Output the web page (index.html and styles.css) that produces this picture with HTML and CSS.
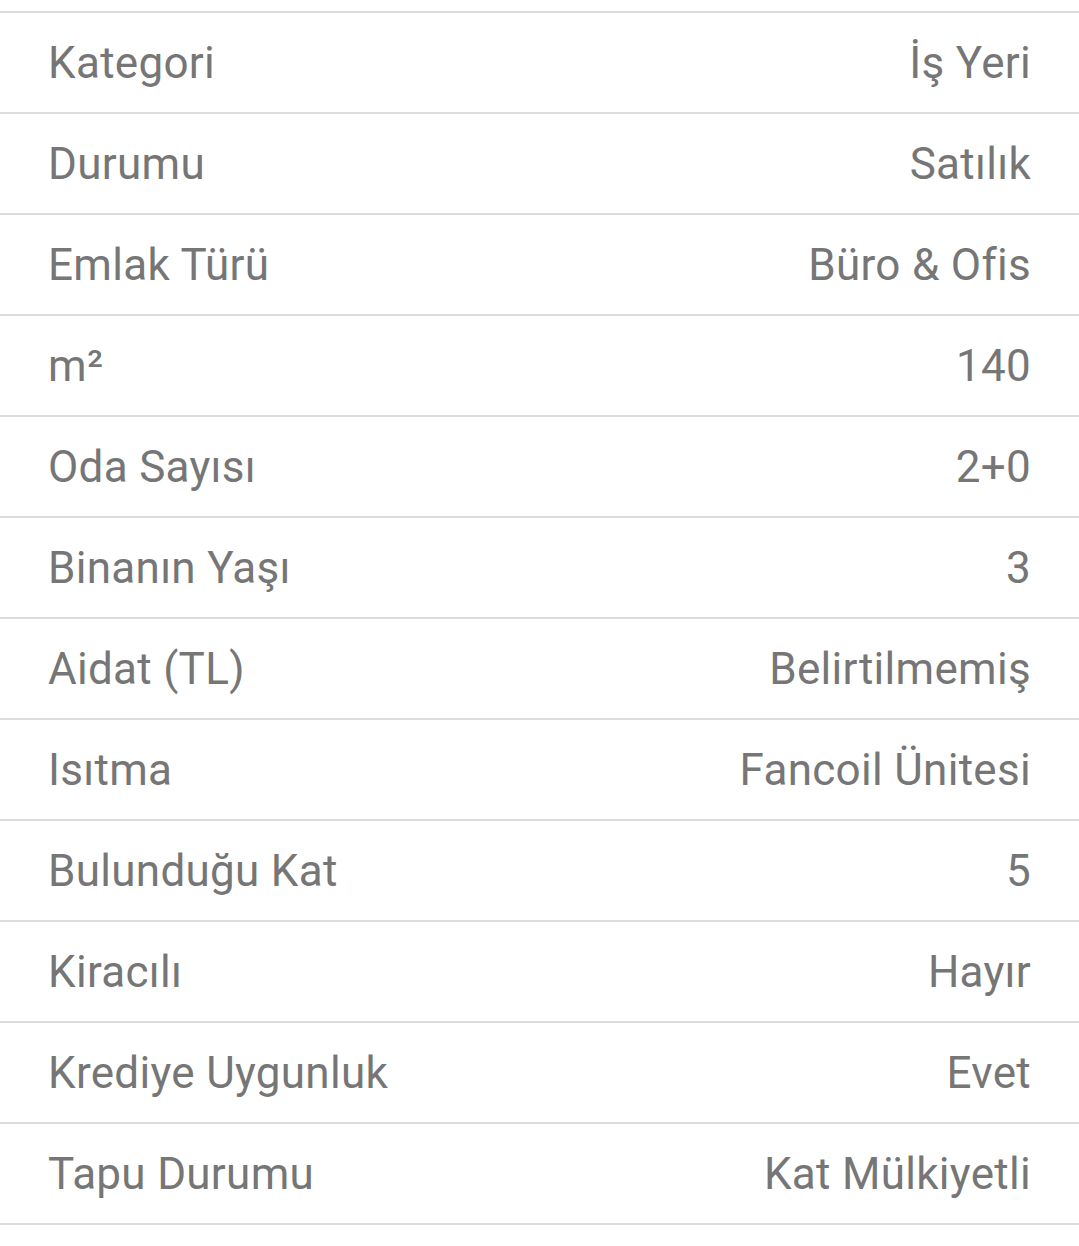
FILE: index.html
```html
<!DOCTYPE html>
<html lang="tr">
<head>
<meta charset="utf-8">
<link rel="stylesheet" href="styles.css">
</head>
<body>
<div class="list">
  <div class="row"><span class="label">Kategori</span><span class="value">İş Yeri</span></div>
  <div class="row"><span class="label">Durumu</span><span class="value">Satılık</span></div>
  <div class="row"><span class="label">Emlak Türü</span><span class="value">Büro &amp; Ofis</span></div>
  <div class="row"><span class="label">m²</span><span class="value">140</span></div>
  <div class="row"><span class="label">Oda Sayısı</span><span class="value">2+0</span></div>
  <div class="row"><span class="label">Binanın Yaşı</span><span class="value">3</span></div>
  <div class="row"><span class="label">Aidat (TL)</span><span class="value">Belirtilmemiş</span></div>
  <div class="row"><span class="label">Isıtma</span><span class="value">Fancoil Ünitesi</span></div>
  <div class="row"><span class="label">Bulunduğu Kat</span><span class="value">5</span></div>
  <div class="row"><span class="label">Kiracılı</span><span class="value">Hayır</span></div>
  <div class="row"><span class="label">Krediye Uygunluk</span><span class="value">Evet</span></div>
  <div class="row"><span class="label">Tapu Durumu</span><span class="value">Kat Mülkiyetli</span></div>
</div>
</body>
</html>
```
FILE: styles.css
```css
html, body {
  margin: 0;
  padding: 0;
  background: #ffffff;
}
body {
  font-family: Roboto, "Noto Sans", sans-serif;
  color: #767676;
}
.list {
  padding-top: 11px;
}
.row {
  display: flex;
  justify-content: space-between;
  align-items: center;
  height: 99px;
  border-top: 2px solid #dcdcdc;
  padding: 0 48px 0 48px;
  font-size: 44px;
  letter-spacing: 0.3px;
}
.row:last-child {
  border-bottom: 2px solid #dcdcdc;
}
.label, .value {
  line-height: 1;
}
```
